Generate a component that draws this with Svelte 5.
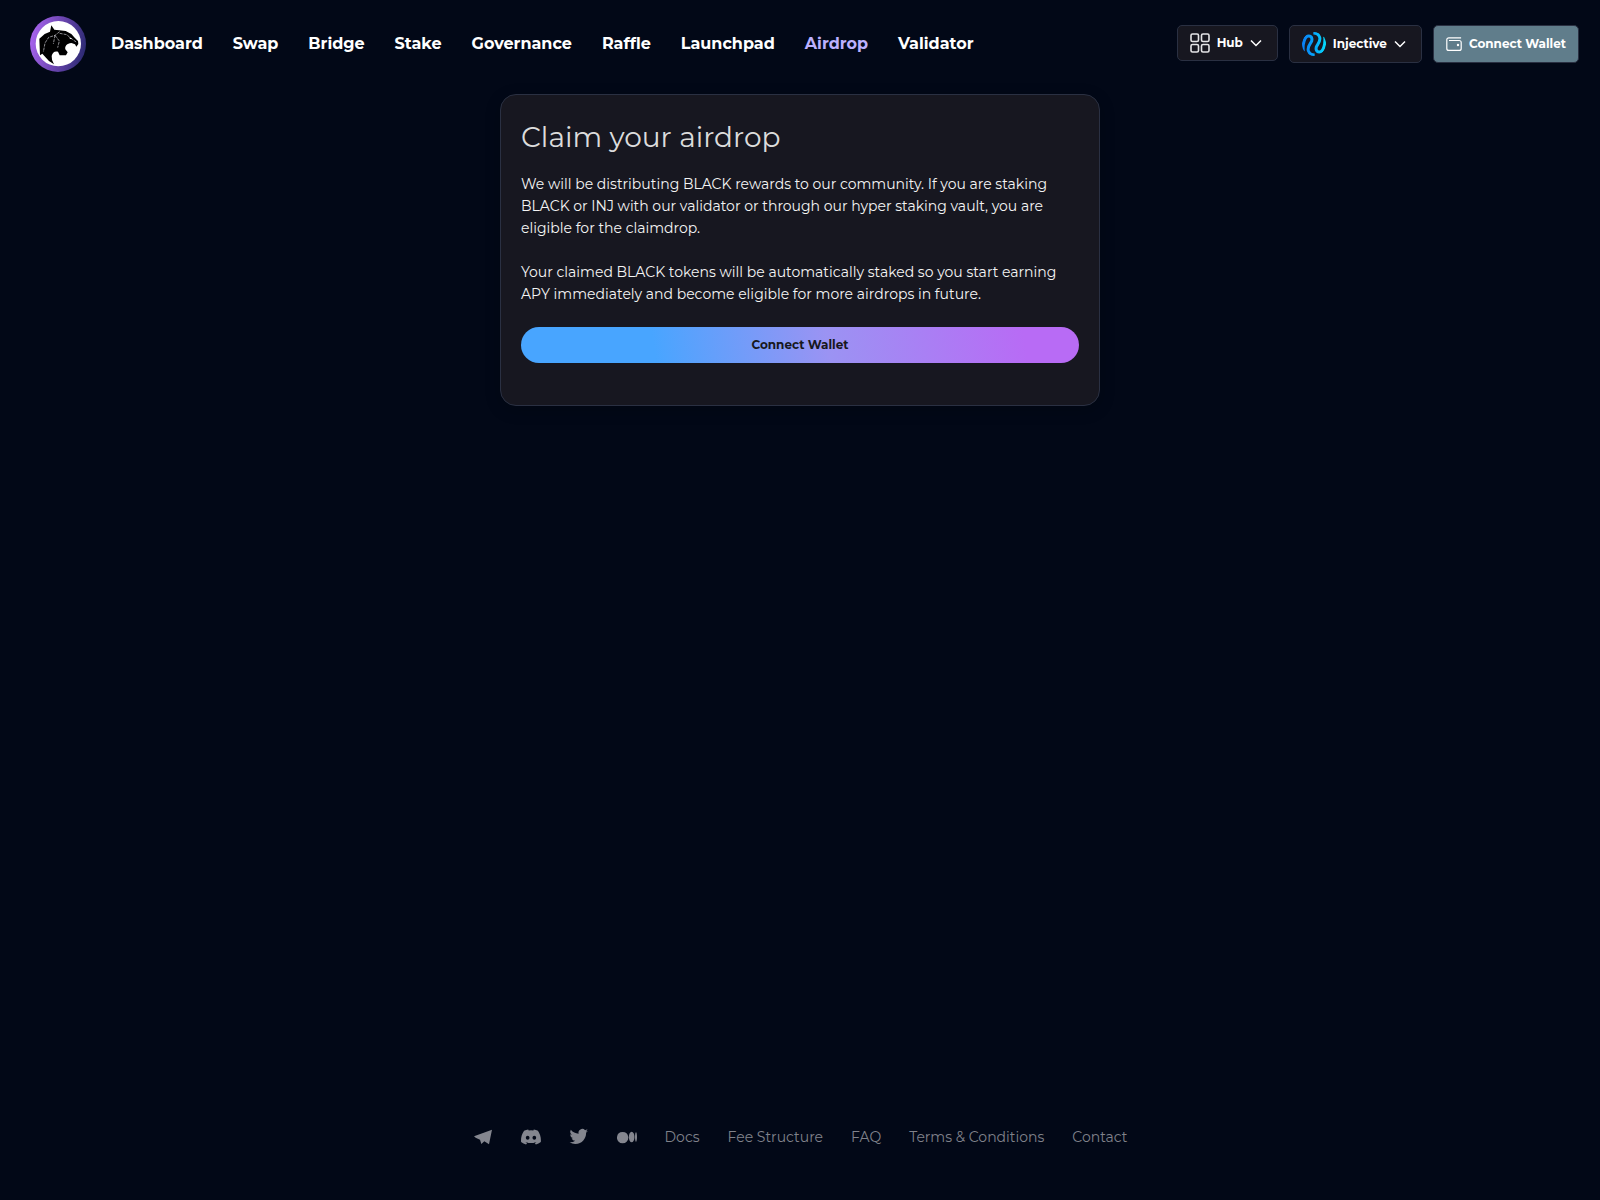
<script>
  const links = ['Dashboard', 'Swap', 'Bridge', 'Stake', 'Governance', 'Raffle', 'Launchpad', 'Airdrop', 'Validator'];
  const active = 'Airdrop';
  const footerLinks = ['Docs', 'Fee Structure', 'FAQ', 'Terms & Conditions', 'Contact'];
  const socials = [
    { name: 'Telegram', box: '0 0 60 60', path: 'M3 28 57 8 48 52 34 43 25 51 21 38 8 32Z' },
    { name: 'Discord', box: '0 0 24 24', path: 'M20.3 4.4A19.8 19.8 0 0 0 15.4 2.9l-.6 1.3a18.3 18.3 0 0 0-5.5 0L8.6 2.9a19.7 19.7 0 0 0-4.9 1.5C.5 9-.3 13.6.1 18.1a19.9 19.9 0 0 0 6 3l1.3-2-1.9-.9.4-.3a14.2 14.2 0 0 0 12.1 0l.4.3-1.9.9 1.3 2a19.8 19.8 0 0 0 6-3c.5-5.2-.8-9.7-3.5-13.7ZM8 15.3c-1.2 0-2.2-1.1-2.2-2.4S6.8 10.5 8 10.5s2.2 1.1 2.2 2.4-1 2.4-2.2 2.4Zm8 0c-1.2 0-2.2-1.1-2.2-2.4s1-2.4 2.2-2.4 2.2 1.1 2.2 2.4-1 2.4-2.2 2.4Z' },
    { name: 'Twitter', box: '-1 0 26 26', path: 'M23.6 4.9a10 10 0 0 1-2.8.8 4.9 4.9 0 0 0 2.2-2.7c-1 .6-2 1-3.1 1.2a4.9 4.9 0 0 0-8.4 4.5A13.9 13.9 0 0 1 1.4 3.6a4.9 4.9 0 0 0 1.5 6.5 4.9 4.9 0 0 1-2.2-.6v.1a4.9 4.9 0 0 0 3.9 4.8 5 5 0 0 1-2.2.1 4.9 4.9 0 0 0 4.6 3.4A9.9 9.9 0 0 1-.3 19.9a14 14 0 0 0 7.5 2.2c9.1 0 14-7.5 14-14v-.6a10 10 0 0 0 2.4-2.6Z' },
    { name: 'Medium', box: '0 0 24 24', path: 'M13.5 12a6.8 6.8 0 1 1-13.5 0 6.8 6.8 0 0 1 13.5 0ZM21 12c0 3.5-1.5 6.4-3.4 6.4s-3.4-2.9-3.4-6.4 1.5-6.4 3.4-6.4S21 8.5 21 12ZM24 12c0 3.2-.5 5.7-1.2 5.7s-1.2-2.5-1.2-5.7.5-5.7 1.2-5.7S24 8.8 24 12Z' }
  ];
</script>

<div class="page">
  <header>
    <a class="logo" href="#home" aria-label="Home">
      <svg viewBox="30 24 168 168">
        <defs>
          <linearGradient id="ring" x1="0" y1="0.4" x2="1" y2="0.6">
            <stop offset="0" stop-color="#a864ee" />
            <stop offset="0.5" stop-color="#6b45b0" />
            <stop offset="1" stop-color="#2c2a72" />
          </linearGradient>
        </defs>
        <circle cx="114" cy="108" r="84" fill="url(#ring)" />
        <circle cx="115" cy="107" r="68" fill="#fff" />
        <path d="M94 52 103 65 118 67 137 69 154 78 164 89 174 99 175 108 169 116 165 109 154 105C141 106 134 114 136 124L143 133 138 142 119 142 114 131C104 128 97 134 95 144Q94 156 102 169 86 161 78 149L67 137 60 142 58 92 74 78 90 71Z" />
        <path d="M119 71 105 82 86 88 75 105 70 132M105 82 100 108M105 82 118 99 113 119M119 76 140 80 153 91 170 103" fill="none" stroke="#d0d0d6" stroke-width="2" stroke-dasharray="9 3" />
        <path d="m148 88 9 4-7 1Z" fill="#fff" />
      </svg>
    </a>
    <nav>
      {#each links as link}
        <a href="#{link.toLowerCase()}" class:active={link === active}>{link}</a>
      {/each}
    </nav>
    <div class="actions">
      <button class="box hub">
        <svg class="grid" viewBox="0 0 20 20" fill="none" stroke="#e4e4e6" stroke-width="1.6">
          <rect x="1" y="1" width="7.5" height="7.5" rx="1.5" /><rect x="11.5" y="1" width="7.5" height="7.5" rx="1.5" />
          <rect x="1" y="11.5" width="7.5" height="7.5" rx="1.5" /><rect x="11.5" y="11.5" width="7.5" height="7.5" rx="1.5" />
        </svg>
        <span>Hub</span>
        <svg class="chev" viewBox="0 0 12 12"><path d="m1 3.5 5 5 5-5" /></svg>
      </button>
      <button class="box">
        <svg class="inj" viewBox="0 0 72 72">
          <defs>
            <linearGradient id="inj" x1="0" y1="0" x2="72" y2="0" gradientUnits="userSpaceOnUse">
              <stop offset="0" stop-color="#0a7cf4" /><stop offset="0.5" stop-color="#06a6fb" /><stop offset="1" stop-color="#05dcfb" />
            </linearGradient>
            <clipPath id="disc"><circle cx="36" cy="36" r="36" /></clipPath>
          </defs>
          <g clip-path="url(#disc)" fill="none" stroke="url(#inj)" stroke-width="9">
            <path d="M4 58C1 36 8 12 20 12 32 12 31 25 27 31 21 40 16 46 19 56 22 65 29 69 38 69" />
            <path d="M68 14C71 36 64 60 52 60 40 60 41 47 45 41 51 32 56 26 53 16 50 7 43 3 34 3" />
          </g>
        </svg>
        <span>Injective</span>
        <svg class="chev" viewBox="0 0 12 12"><path d="m1 3.5 5 5 5-5" /></svg>
      </button>
      <button class="box connect">
        <svg class="wallet" viewBox="0 0 16 16" fill="none" stroke="#fff" stroke-width="1.2">
          <path d="M14.5 2.5V1.8H2.8a2 2 0 0 0-2 2v8.6a2 2 0 0 0 2 2h10.4a2 2 0 0 0 2-2V6.5a2 2 0 0 0-2-2H3" />
          <circle cx="12" cy="9" r="0.6" fill="#fff" />
        </svg>
        <span>Connect Wallet</span>
      </button>
    </div>
  </header>

  <main>
    <section class="card">
      <h1>Claim your airdrop</h1>
      <p>We will be distributing BLACK rewards to our community. If you are staking BLACK or INJ with our validator or through our hyper staking vault, you are eligible for the claimdrop.</p>
      <p>Your claimed BLACK tokens will be automatically staked so you start earning APY immediately and become eligible for more airdrops in future.</p>
      <button class="claim">Connect Wallet</button>
    </section>
  </main>

  <footer>
    {#each socials as s}
      <a class="social" href="#{s.name.toLowerCase()}" aria-label={s.name}>
        <svg viewBox={s.box}><path d={s.path} /></svg>
      </a>
    {/each}
    {#each footerLinks as link}
      <a href="#{link}">{link}</a>
    {/each}
  </footer>
</div>

<style>
  :global(body) {
    margin: 0;
    background: #020817;
  }
  .page {
    min-height: 100vh;
    display: flex;
    flex-direction: column;
    box-sizing: border-box;
    font-family: Montserrat, Inter, 'Open Sans', sans-serif;
    color: #fff;
  }
  a {
    color: inherit;
    text-decoration: none;
  }
  button {
    font: inherit;
    cursor: pointer;
  }
  svg {
    display: block;
    flex: none;
  }
  header {
    display: flex;
    align-items: center;
    padding: 16px 21px 22px 30px;
  }
  .logo svg {
    width: 56px;
    height: 56px;
  }
  nav {
    display: flex;
    gap: 30px;
    margin-left: 25px;
    font-size: 16px;
    line-height: 24px;
    font-weight: 700;
  }
  nav .active {
    color: #bcb0ff;
  }
  .actions {
    display: flex;
    align-items: flex-start;
    gap: 11px;
    margin-left: auto;
  }
  .box {
    display: flex;
    align-items: center;
    gap: 7px;
    height: 38px;
    padding: 0 15px 0 12px;
    border: 1px solid #2a3042;
    border-radius: 5px;
    background: #171720;
    color: #fff;
    font-size: 12px;
    line-height: 16px;
    font-weight: 700;
    white-space: nowrap;
  }
  .box span {
    padding-bottom: 1px;
  }
  .hub {
    height: 36px;
  }
  .connect {
    padding: 0 12px;
    background: #607d8b;
  }
  .grid {
    width: 20px;
    height: 20px;
  }
  .inj {
    width: 24px;
    height: 24px;
  }
  .wallet {
    width: 16px;
    height: 16px;
  }
  .chev {
    width: 12px;
    height: 12px;
    fill: none;
    stroke: #fff;
    stroke-width: 1.5;
  }
  main {
    flex: 1;
    display: flex;
    justify-content: center;
    align-items: flex-start;
  }
  .card {
    box-sizing: border-box;
    width: 100%;
    max-width: 600px;
    padding: 21px 20px 42px;
    border: 1px solid #2a3042;
    border-radius: 16px;
    background: #171720;
    box-shadow: 0 4px 16px rgba(0, 0, 0, 0.2);
  }
  h1 {
    margin: 0 0 15px;
    font-size: 28px;
    line-height: 42px;
    font-weight: 400;
    color: #dcdcdc;
  }
  p {
    margin: 0 0 22px;
    font-size: 14px;
    line-height: 22px;
    color: #f4f4f4;
  }
  .claim {
    width: 100%;
    height: 36px;
    padding: 0 0 2px;
    border: 0;
    border-radius: 18px;
    background: linear-gradient(81deg, #48a5ff 24%, #9b93f3 55%, #b86bf5 90%);
    color: #171720;
    font-size: 12px;
    font-weight: 700;
  }
  footer {
    display: flex;
    justify-content: center;
    align-items: center;
    gap: 28px;
    padding: 20px 20px 51px;
    font-size: 14px;
    line-height: 24px;
    font-weight: 400;
    color: #80828b;
  }
  .social svg {
    width: 20px;
    height: 20px;
    fill: #84868f;
  }
</style>
